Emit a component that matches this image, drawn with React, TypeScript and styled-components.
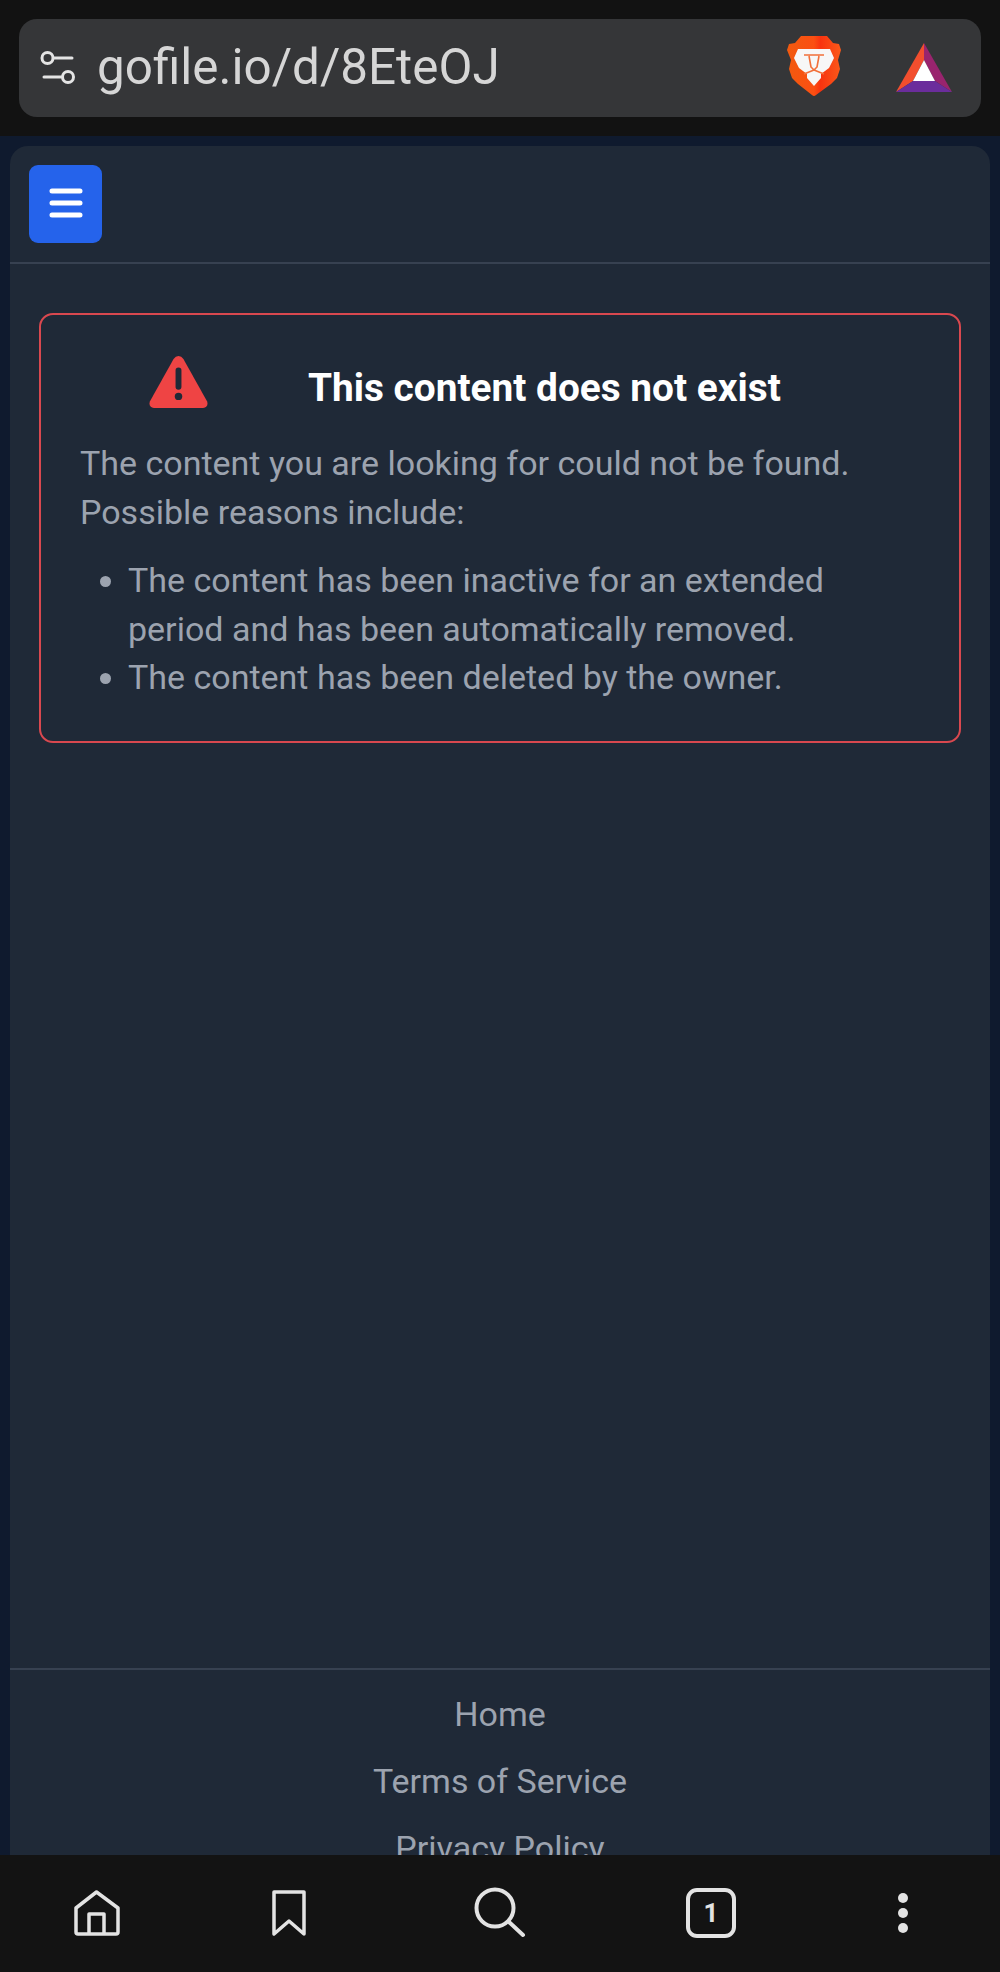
import React from "react";
import styled, { createGlobalStyle } from "styled-components";

const GlobalStyle = createGlobalStyle`
  html, body {
    margin: 0;
    padding: 0;
    background: #111111;
  }
  * {
    box-sizing: border-box;
  }
`;

const Screen = styled.div`
  width: 1000px;
  height: 1972px;
  display: flex;
  flex-direction: column;
  overflow: hidden;
  font-family: Roboto, "Liberation Sans", sans-serif;
`;

const TopBar = styled.header`
  height: 136px;
  flex-shrink: 0;
  padding: 19px;
  background: #121212;
`;

const UrlBar = styled.div`
  height: 98px;
  display: flex;
  align-items: center;
  padding: 0 29px 0 21px;
  border-radius: 18px;
  background: #353638;
`;

const UrlText = styled.span`
  margin-left: 21px;
  flex: 1;
  font-size: 49.4px;
  font-weight: 400;
  color: #d6d6d6;
  position: relative;
  top: -1px;
`;

const BraveIcon = styled.svg`
  width: 54px;
  height: 64px;
  margin-right: 55px;
`;

const Main = styled.main`
  flex: 1;
  min-height: 0;
  overflow: hidden;
  padding: 10px 10px 0;
  background: #0f1a2e;
`;

const Card = styled.div`
  background: #1f2937;
  border-radius: 18px 18px 0 0;
`;

const CardHeader = styled.div`
  height: 118px;
  padding: 19px;
  border-bottom: 2px solid #374151;
`;

const MenuButton = styled.button`
  width: 73px;
  height: 78px;
  display: flex;
  align-items: center;
  justify-content: center;
  padding: 0 0 2px;
  border: none;
  border-radius: 9px;
  background: #2563eb;
`;

const CardBody = styled.div`
  height: 1404px;
  padding: 49px 29px 0;
`;

const Alert = styled.section`
  height: 430px;
  padding: 32px 39px;
  border: 2px solid #d9484f;
  border-radius: 14px;
`;

const AlertHead = styled.div`
  display: flex;
  align-items: flex-start;
  height: 82px;
  margin-bottom: 10px;
`;

const AlertIcon = styled.svg`
  width: 59px;
  height: 52px;
  margin: 9px 0 0 69px;
  flex-shrink: 0;
`;

const AlertTitle = styled.h2`
  margin: 17px 0 0 100px;
  font-size: 38.8px;
  line-height: 48px;
  font-weight: 700;
  white-space: nowrap;
  color: #ffffff;
`;

const BodyText = styled.p`
  margin: 0 0 20px;
  font-size: 34px;
  line-height: 48.5px;
  color: #9ca3af;
`;

const ReasonList = styled.ul`
  margin: 0;
  padding: 0 0 0 48px;
  font-size: 34px;
  line-height: 48.5px;
  color: #9ca3af;
`;

const Footer = styled.footer`
  border-top: 2px solid #374151;
  padding-top: 20px;
  display: flex;
  flex-direction: column;
  align-items: center;
  gap: 19px;
`;

const FooterLink = styled.a`
  font-size: 34px;
  line-height: 48px;
  color: #9ca3af;
`;

const BottomNav = styled.nav`
  height: 117px;
  flex-shrink: 0;
  display: grid;
  grid-template-columns: 194px 190px 232px 190px 194px;
  align-items: center;
  justify-items: center;
  padding-bottom: 1px;
  background: #131313;
`;

const TabCount = styled.div`
  width: 50px;
  height: 50px;
  display: flex;
  align-items: center;
  justify-content: center;
  border: 4px solid #e3e3e3;
  border-radius: 11px;
  font-size: 26px;
  font-weight: 700;
  color: #e3e3e3;
`;

const DotColumn = styled.div`
  display: flex;
  flex-direction: column;
  gap: 5px;
`;

const Dot = styled.span`
  width: 10px;
  height: 10px;
  border-radius: 50%;
  background: #e3e3e3;
`;

const links = ["Home", "Terms of Service", "Privacy Policy"];

const TuneIcon = () => (
  <svg width="36" height="36" viewBox="0 0 36 36" fill="none" stroke="#e4e4e4" strokeWidth="3" strokeLinecap="round">
    <circle cx="7.500" cy="8" r="5.500" />
    <path d="M14 8h18" />
    <circle cx="28" cy="27" r="5.500" />
    <path d="M4 27h18" />
  </svg>
);

const LionIcon = () => (
  <BraveIcon viewBox="0 0 54 64">
    <defs>
      <linearGradient id="braveGrad" x1="0" y1="0" x2="1" y2="0">
        <stop offset="0" stopColor="#f15a0f" />
        <stop offset="0.5" stopColor="#fb4f12" />
        <stop offset="0.62" stopColor="#f8330f" />
        <stop offset="1" stopColor="#fb5a1a" />
      </linearGradient>
    </defs>
    <path
      d="M14 0h26l6 7 6 1 2 6-3 10 2 9-3 9-6 6-15 11q-2 2-4 0L11 48l-6-6-3-9 2-9L0 14l2-6 6-1z"
      fill="url(#braveGrad)"
    />
    <path d="M11 13h32l4 9-5 10-8 6v4l-7 8-7-8v-4l-8-6L7 22z" fill="#f7f7f7" />
    <path
      d="M17 19h20M22 20l2 11 3 3 3-3 2-11M17 38l10-4 10 4"
      stroke="#f2703a"
      strokeWidth="1.600"
      fill="none"
      strokeLinejoin="round"
    />
  </BraveIcon>
);

const BatIcon = () => (
  <svg width="56" height="50" viewBox="0 0 56 50">
    <path d="M28 0L0 49l17-11L28 17z" fill="#f24e2e" />
    <path d="M28 0l28 49-17-11L28 17z" fill="#99246e" />
    <path d="M0 49h56L39 38H17z" fill="#6b2d9c" />
    <path d="M28 17L17 38h22z" fill="#ffffff" />
  </svg>
);

const HomeIcon = () => (
  <svg width="46" height="46" viewBox="0 0 46 46" fill="none" stroke="#e3e3e3" strokeWidth="3.500" strokeLinejoin="round">
    <path d="M2 18L22.500 2 44 18v24q0 2-2 2H4q-2 0-2-2z" />
    <path d="M15 44V24h15v20" />
  </svg>
);

const BookmarkIcon = () => (
  <svg width="34" height="46" viewBox="0 0 34 46" fill="none" stroke="#e3e3e3" strokeWidth="3.500" strokeLinejoin="round">
    <path d="M2 2h30v42L17 31 2 44z" />
  </svg>
);

const SearchIcon = () => (
  <svg width="52" height="52" viewBox="0 0 52 52" fill="none" stroke="#e3e3e3" strokeWidth="4" strokeLinecap="round">
    <circle cx="21" cy="21" r="18.500" />
    <path d="M35 35l14 13" />
  </svg>
);

const App: React.FC = () => {
  return (
    <>
      <GlobalStyle />
      <Screen>
        <TopBar>
          <UrlBar>
            <TuneIcon />
            <UrlText>gofile.io/d/8EteOJ</UrlText>
            <LionIcon />
            <BatIcon />
          </UrlBar>
        </TopBar>
        <Main>
          <Card>
            <CardHeader>
              <MenuButton aria-label="Menu">
                <svg width="34" height="32" viewBox="0 0 34 32" fill="none" stroke="#ffffff" strokeWidth="5" strokeLinecap="round">
                  <path d="M3 4h28M3 16h28M3 28h28" />
                </svg>
              </MenuButton>
            </CardHeader>
            <CardBody>
              <Alert>
                <AlertHead>
                  <AlertIcon viewBox="0 0 60 54" preserveAspectRatio="none">
                    <path d="M30 0q3 0 5 3l24 44q2 6-4 7H5q-6-1-4-7L25 3q2-3 5-3z" fill="#ef4444" />
                    <path d="M30 15v17" stroke="#1f2937" strokeWidth="6" strokeLinecap="round" />
                    <circle cx="30" cy="42" r="3.800" fill="#1f2937" />
                  </AlertIcon>
                  <AlertTitle>This content does not exist</AlertTitle>
                </AlertHead>
                <BodyText>
                  The content you are looking for could not be found.
                  <br />
                  Possible reasons include:
                </BodyText>
                <ReasonList>
                  <li>The content has been inactive for an extended period and has been automatically removed.</li>
                  <li>The content has been deleted by the owner.</li>
                </ReasonList>
              </Alert>
            </CardBody>
            <Footer>
              {links.map((link) => (
                <FooterLink key={link}>{link}</FooterLink>
              ))}
            </Footer>
          </Card>
        </Main>
        <BottomNav>
          <HomeIcon />
          <BookmarkIcon />
          <SearchIcon />
          <TabCount>1</TabCount>
          <DotColumn>
            <Dot />
            <Dot />
            <Dot />
          </DotColumn>
        </BottomNav>
      </Screen>
    </>
  );
};

export default App;
